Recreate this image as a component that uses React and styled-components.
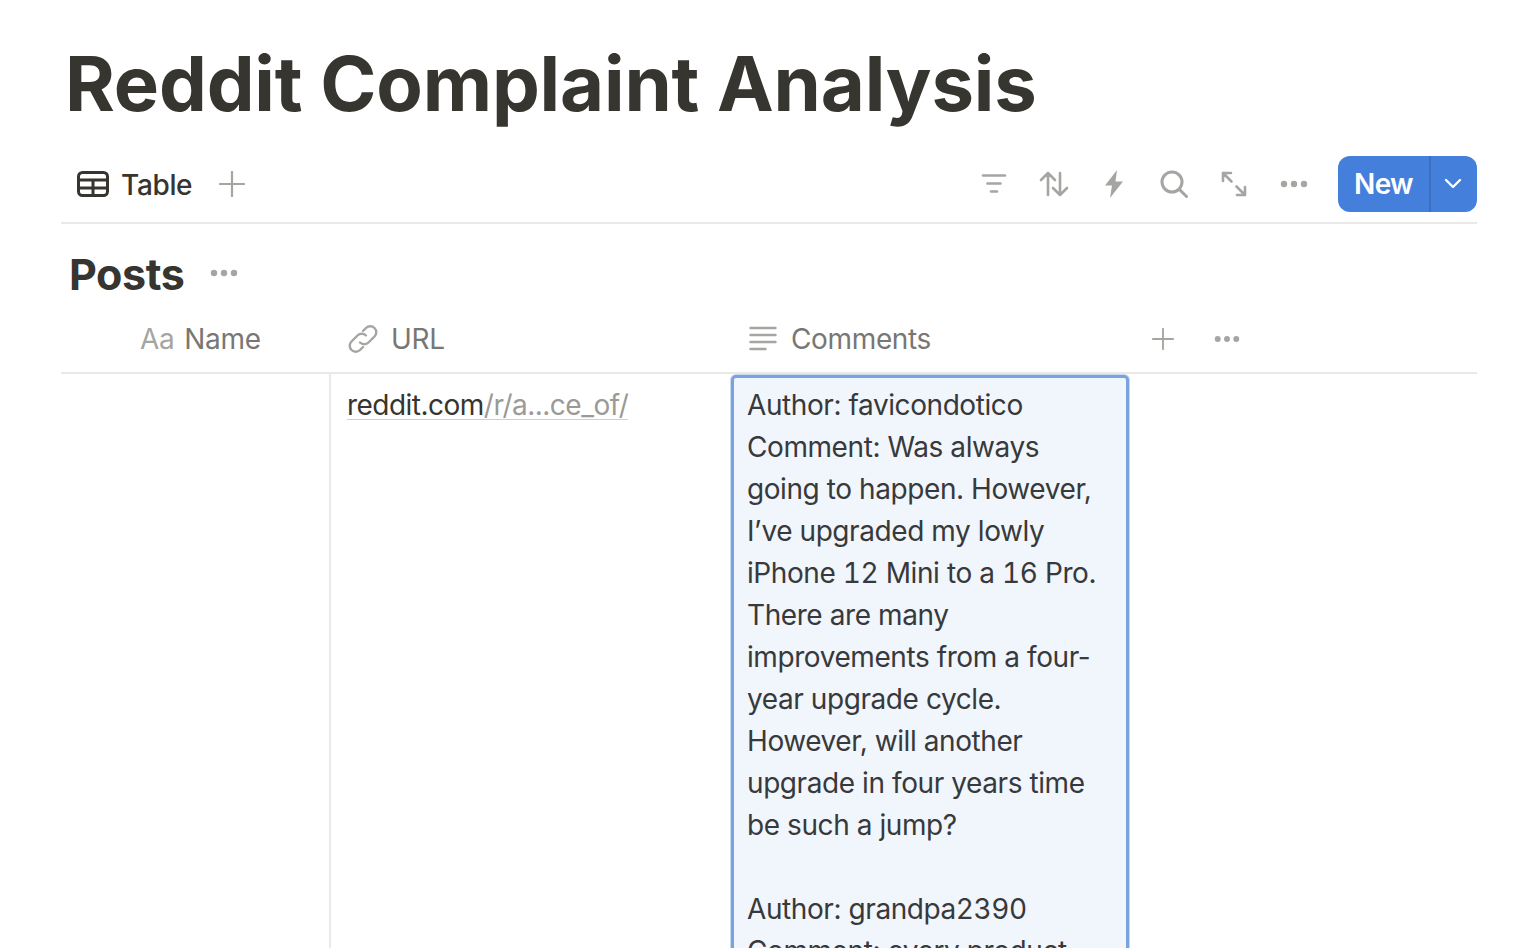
import React from "react";
import styled, { createGlobalStyle } from "styled-components";

const Global = createGlobalStyle`
  html, body { margin: 0; padding: 0; background: #fff; height: 948px; overflow: hidden; }
  #root { height: 948px; overflow: hidden; }
  * { box-sizing: border-box; }
`;

const Page = styled.div`
  height: 948px;
  overflow: hidden;
  padding: 0 45px 0 61px;
  font-family: Inter, "Liberation Sans", sans-serif;
  color: #37352f;
`;
const Title = styled.h1`
  margin: 0;
  padding: 40px 0 0 4px;
  height: 157px;
  font-size: 76px;
  line-height: 86px;
  font-weight: 700;
  letter-spacing: -0.18px;
  white-space: nowrap;
`;
const Toolbar = styled.div`
  display: flex;
  align-items: center;
  justify-content: space-between;
  height: 67px;
  padding-bottom: 11px;
  border-bottom: 2px solid #e9e9e7;
`;
const ViewTabs = styled.div`
  display: flex;
  align-items: center;
  padding-left: 16px;
`;
const TabLabel = styled.span`
  margin: 2px 27px 0 12px;
  font-size: 28px;
  font-weight: 500;
  letter-spacing: -0.35px;
`;
const Actions = styled.div`
  display: flex;
  align-items: center;
`;
const ActionIcon = styled.span`
  display: flex;
  width: 60px;
  justify-content: center;
  align-items: center;
`;
const NewButton = styled.div`
  display: flex;
  margin-left: 14px;
  width: 139px;
  height: 56px;
  border-radius: 12px;
  overflow: hidden;
  background: #447fdc;
  color: #fff;
`;
const NewLabel = styled.span`
  width: 93px;
  border-right: 2px solid #3a6fc4;
  display: flex;
  align-items: center;
  justify-content: center;
  font-size: 28px;
  font-weight: 600;
  letter-spacing: -0.7px;
`;
const NewCaret = styled.span`
  flex: 1;
  display: flex;
  align-items: center;
  justify-content: center;
  padding-right: 2px;
`;
const GroupHead = styled.div`
  display: flex;
  align-items: center;
  height: 100px;
  padding: 0 0 0 8px;
`;
const GroupTitle = styled.h2`
  margin: 0 25px 0 0;
  font-size: 43px;
  line-height: 50px;
  font-weight: 700;
  letter-spacing: -0.4px;
`;
const GroupDots = styled.span`
  display: block;
  margin-top: -3px;
`;
const HeaderRow = styled.div`
  display: grid;
  grid-template-columns: 269px 400px 400px 64px 64px;
  height: 50px;
  border-bottom: 2px solid #e9e9e7;
  align-items: start;
`;
const HeaderCell = styled.div`
  display: flex;
  align-items: center;
  height: 34px;
  margin-top: -2px;
  padding-left: ${(p) => p.$pad}px;
  gap: ${(p) => p.$gap || 11}px;
  font-size: 28px;
  letter-spacing: -0.35px;
  color: #787774;
`;
const AaGlyph = styled.span`
  color: #a5a5a2;
  font-size: 28px;
`;
const BodyRow = styled.div`
  display: grid;
  grid-template-columns: 270px 399px 400px;
`;
const EmptyCell = styled.div`
  height: 600px;
  border-right: 2px solid #e9e9e7;
`;
const UrlCell = styled.div`
  padding: 10px 0 0 16px;
  font-size: 28px;
  line-height: 42px;
`;
const UrlLink = styled.span`
  display: inline-block;
  border-bottom: 1px solid #cfcfcc;
  line-height: 36px;
  height: 33px;
  letter-spacing: -0.52px;
`;
const UrlMuted = styled.span`
  color: #9b9a97;
`;
const CommentCell = styled.div`
  margin: 1px 0 0 0;
  width: 398px;
  height: 800px;
  position: relative;
  left: 1px;
  padding: 6px 14px 0 13px;
  background: #f1f5fc;
  border: 3px solid #78a3de;
  border-radius: 5px;
  box-shadow: 0 0 0 1px #c8daf3;
  font-size: 28px;
  line-height: 42px;
  letter-spacing: -0.42px;
  color: #37393b;
`;
const Num = styled.span`
  font-variant-numeric: tabular-nums;
`;

const Stroke = styled.svg`
  display: block;
  flex: none;
  fill: none;
  stroke: ${(p) => p.$c || "#a5a5a2"};
  stroke-width: ${(p) => p.$w || 2.6};
  stroke-linecap: round;
  stroke-linejoin: round;
`;
const DotsSvg = styled.svg`
  display: block;
  flex: none;
  fill: #a5a5a2;
`;
const Dots = ({ w = 28 }) => (
  <DotsSvg width={w} height="8" viewBox="0 0 28 8">
    <circle cx="4" cy="4" r="3.2" />
    <circle cx="14" cy="4" r="3.2" />
    <circle cx="24" cy="4" r="3.2" />
  </DotsSvg>
);
const Plus = ({ s = 26 }) => (
  <Stroke width={s} height={s} viewBox="0 0 26 26" $w={2.2}>
    <path d="M13 1v24M1 13h24" />
  </Stroke>
);

const comment = [
  "Author: favicondotico",
  "Comment: Was always",
  "going to happen. However,",
  "I\u2019ve upgraded my lowly",
  <>iPhone <Num>12</Num> Mini to a <Num>16</Num> Pro.</>,
  "There are many",
  "improvements from a four-",
  "year upgrade cycle.",
  "However, will another",
  "upgrade in four years time",
  "be such a jump?",
  "\u00a0",
  <>Author: grandpa<Num>2390</Num></>,
  "Comment: every product",
];

export default function App() {
  return (
    <Page>
      <Global />
      <Title>Reddit Complaint Analysis</Title>
      <Toolbar>
        <ViewTabs>
          <Stroke width="32" height="26" viewBox="0 0 32 26" $c="#37352f" $w={3}>
            <rect x="1.500" y="1.500" width="29" height="23" rx="4" />
            <path d="M1.500 9h29M1.500 17h29M16 9v15.500" />
          </Stroke>
          <TabLabel>Table</TabLabel>
          <Plus />
        </ViewTabs>
        <Actions>
          <ActionIcon>
            <Stroke width="26" height="22" viewBox="0 0 26 22">
              <path d="M2 2.500h22M6.500 10.500h13M10 18.500h6" />
            </Stroke>
          </ActionIcon>
          <ActionIcon>
            <Stroke width="30" height="26" viewBox="0 0 30 26">
              <path d="M9 24V2M2 9l7-7 7 7M21 2v22M14 17l7 7 7-7" />
            </Stroke>
          </ActionIcon>
          <ActionIcon>
            <svg width="20" height="28" viewBox="0 0 20 28">
              <path d="M13 0 1 15.500h7L6 28 19 11.500h-7.500z" fill="#a5a5a2" />
            </svg>
          </ActionIcon>
          <ActionIcon>
            <Stroke width="28" height="28" viewBox="0 0 28 28" $w={3}>
              <circle cx="12" cy="12" r="10" />
              <path d="m19.500 19.500 7 7" />
            </Stroke>
          </ActionIcon>
          <ActionIcon>
            <Stroke width="26" height="26" viewBox="0 0 26 26">
              <path d="M2 10V2h8M2 2l8.500 8.500M24 16v8h-8M24 24l-8.500-8.500" />
            </Stroke>
          </ActionIcon>
          <ActionIcon>
            <Dots />
          </ActionIcon>
          <NewButton>
            <NewLabel>New</NewLabel>
            <NewCaret>
              <Stroke width="18" height="12" viewBox="0 0 18 12" $c="#fff" $w={2.4}>
                <path d="m2 2 7 7 7-7" />
              </Stroke>
            </NewCaret>
          </NewButton>
        </Actions>
      </Toolbar>
      <GroupHead>
        <GroupTitle>Posts</GroupTitle>
        <GroupDots>
          <Dots w={30} />
        </GroupDots>
      </GroupHead>
      <HeaderRow>
        <HeaderCell $pad={79} $gap={10}>
          <AaGlyph>Aa</AaGlyph>
          Name
        </HeaderCell>
        <HeaderCell $pad={17} $gap={12}>
          <Stroke width="32" height="32" viewBox="0 0 32 32" $w={2.4}>
            <path d="M13 19.500a6 6 0 0 0 8.500 0l6-6a6 6 0 0 0-8.500-8.500l-3 3" />
            <path d="M19 12.500a6 6 0 0 0-8.500 0l-6 6a6 6 0 0 0 8.500 8.500l3-3" />
          </Stroke>
          URL
        </HeaderCell>
        <HeaderCell $pad={19} $gap={14}>
          <Stroke width="28" height="26" viewBox="0 0 28 26" $w={2.4}>
            <path d="M1.500 2h25M1.500 9h25M1.500 16h25M1.500 23h15" />
          </Stroke>
          Comments
        </HeaderCell>
        <HeaderCell $pad={22}>
          <Plus s={22} />
        </HeaderCell>
        <HeaderCell $pad={20}>
          <Dots w={26} />
        </HeaderCell>
      </HeaderRow>
      <BodyRow>
        <EmptyCell />
        <UrlCell>
          <UrlLink>
            reddit.com<UrlMuted>/r/a...ce_of/</UrlMuted>
          </UrlLink>
        </UrlCell>
        <CommentCell>
          {comment.map((l, i) => (
            <div key={i}>{l}</div>
          ))}
        </CommentCell>
      </BodyRow>
    </Page>
  );
}
